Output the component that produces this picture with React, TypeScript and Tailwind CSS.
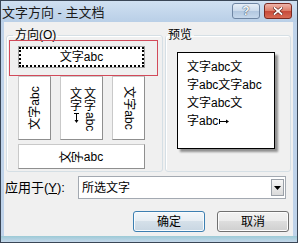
import React from "react";

function HArrow() {
  return (
    <svg width="11" height="7" viewBox="0 0 11 7" className="ml-[1px]">
      <path d="M0.5 1 V6 M0.5 3.5 H9" stroke="#000" strokeWidth="1" fill="none" />
      <path d="M7 1.5 L10 3.5 L7 5.5 Z" fill="#000" />
    </svg>
  );
}

function VArrow() {
  return (
    <svg width="7" height="11" viewBox="0 0 7 11" className="mt-[1px]">
      <path d="M1 0.5 H6 M3.5 0.5 V9" stroke="#000" strokeWidth="1" fill="none" />
      <path d="M1.5 7 L3.5 10 L5.5 7 Z" fill="#000" />
    </svg>
  );
}

export default function App() {
  return (
    <div className="w-[298px] h-[243px] border border-[#3a4656] bg-[#bfd3ea] flex flex-col font-['Liberation_Sans','Noto_Sans_CJK_SC',sans-serif] text-black overflow-hidden">
      {/* title bar */}
      <div className="h-[21px] flex items-start pl-[1px] pr-[5px] bg-linear-to-b from-[#d0e0f1] to-[#b9cfe7]">
        <span className="text-[13px] leading-[13px] mt-[5px] text-[#1a1a1a]">文字方向 - 主文档</span>
        <div className="ml-auto mt-[2px] flex gap-[4px]">
          <div className="w-[28px] h-[16px] rounded-[3px] border border-[#6f86a3] bg-[linear-gradient(#e6eef7,#cbdaeb_50%,#b2c7df_51%,#c6d8ec)] flex items-center justify-center text-[12px] leading-none font-bold text-[#f4f7fb] [text-shadow:0_0_1px_#33465e,0_0_1px_#33465e]">
            ?
          </div>
          <div className="w-[28px] h-[16px] rounded-[3px] border border-[#7a2a22] bg-[linear-gradient(#efb5aa,#dc7a66_50%,#c6493a_51%,#d86b55)] flex items-center justify-center">
            <svg width="10" height="8" viewBox="0 0 10 8">
              <path d="M1.5 1 L8.5 7 M8.5 1 L1.5 7" stroke="#5a1a12" strokeWidth="3" strokeLinecap="square" />
              <path d="M1.5 1 L8.5 7 M8.5 1 L1.5 7" stroke="#fff" strokeWidth="1.8" strokeLinecap="square" />
            </svg>
          </div>
        </div>
      </div>

      {/* body row with side frames */}
      <div className="flex-1 flex pl-[3px] pr-[4px]">
        <div className="w-[289px] bg-[#f0f0f0] flex flex-col pt-[7px]">
          {/* group boxes */}
          <div className="flex ml-[2px] gap-[2px]">
            <fieldset className="w-[157px] h-[143px] border border-[#d5dfe5] rounded-[3px] shadow-[inset_1px_1px_0_#ffffff]">
              <legend className="ml-[6px] px-[2px] text-[12px] leading-[12px] mt-[1px]">
                方向(<span className="underline">O</span>)
              </legend>
              <div className="w-[127px] ml-[11px] mt-[5px] flex flex-col">
                <div className="relative">
                  <div className="h-[22px] border border-[#a0a0a0] bg-white">
                    <div className="h-full border-2 border-dotted border-black flex items-center justify-center text-[12px] leading-none">
                      文字abc
                    </div>
                  </div>
                  <div className="absolute left-[-9px] top-[-6px] w-[149px] h-[36px] border border-[#d24a5a] pointer-events-none" />
                </div>

                <div className="mt-[8px] h-[64px] flex justify-between">
                  <div className="w-[33px] bg-white border border-[#c9c9c9] border-r-[#8f8f8f] border-b-[#8f8f8f] flex items-center justify-center">
                    <span className="inline-block -rotate-90 whitespace-nowrap text-[12px] leading-none">文字abc</span>
                  </div>
                  <div className="w-[43px] bg-white border border-[#c9c9c9] border-r-[#8f8f8f] border-b-[#8f8f8f] flex justify-center pl-[3px] pt-[11px] gap-[2px] text-[12px] leading-[12px]">
                    <div className="w-[12px] flex flex-col items-center">
                      <span>文</span>
                      <span>字</span>
                      <VArrow />
                    </div>
                    <div className="w-[12px] flex flex-col items-center">
                      <span>文</span>
                      <span>字</span>
                      <span className="[writing-mode:vertical-rl] leading-[12px]">abc</span>
                    </div>
                  </div>
                  <div className="w-[33px] bg-white border border-[#c9c9c9] border-r-[#8f8f8f] border-b-[#8f8f8f] flex items-center justify-center">
                    <span className="inline-block rotate-90 whitespace-nowrap text-[12px] leading-none">文字abc</span>
                  </div>
                </div>

                <div className="mt-[4px] h-[25px] bg-white border border-[#c9c9c9] border-r-[#8f8f8f] border-b-[#8f8f8f] flex items-center justify-center text-[12px] leading-none">
                  <span className="inline-block w-[12px] -rotate-90">文</span>
                  <span className="inline-block w-[12px] -rotate-90">字</span>
                  <span>abc</span>
                </div>
              </div>
            </fieldset>

            <fieldset className="w-[126px] h-[143px] border border-[#d5dfe5] rounded-[3px] shadow-[inset_1px_1px_0_#ffffff]">
              <legend className="ml-0 px-[2px] text-[12px] leading-[12px] mt-[1px]">预览</legend>
              <div className="mt-[11px] ml-[11px] w-[98px] h-[97px] bg-white border border-black shadow-[3px_3px_2px_rgba(0,0,0,0.4)] pl-[9px] pt-[5px] text-[12px] leading-[18px]">
                <div>文字abc文</div>
                <div>字abc文字abc</div>
                <div>文字abc文</div>
                <div className="flex items-center">
                  字abc
                  <HArrow />
                </div>
              </div>
            </fieldset>
          </div>

          {/* apply to */}
          <div className="mt-[4px] flex items-center">
            <div className="w-[74px] pl-[1px] text-[13px] leading-none whitespace-nowrap">
              应用于(<span className="underline">Y</span>):
            </div>
            <div className="w-[208px] h-[23px] border border-[#a3a9b1] bg-white flex items-center pl-[3px]">
              <span className="text-[12px] leading-none">所选文字</span>
              <div className="ml-auto mr-[1px] w-[13px] h-[17px] border border-[#9aa0a8] bg-linear-to-b from-[#f6f6f6] to-[#dadada] flex items-center justify-center">
                <svg width="7" height="4" viewBox="0 0 7 4">
                  <path d="M0 0 H7 L3.5 4 Z" fill="#000" />
                </svg>
              </div>
            </div>
          </div>

          {/* buttons */}
          <div className="mt-[12px] flex justify-end gap-[12px] pr-[4px]">
            <div className="w-[72px] h-[21px] rounded-[3px] border border-[#3c7fb1] bg-[linear-gradient(#f3f7fa,#e6edf3_49%,#d5e0e9_50%,#c8d6e2)] shadow-[inset_0_0_0_1px_#f8fbfd] flex items-center justify-center text-[12px] leading-none">
              确定
            </div>
            <div className="w-[72px] h-[21px] rounded-[3px] border border-[#707070] bg-[linear-gradient(#f2f2f2,#ebebeb_49%,#dddddd_50%,#cfcfcf)] shadow-[inset_0_0_0_1px_#fcfcfc] flex items-center justify-center text-[12px] leading-none">
              取消
            </div>
          </div>
        </div>
      </div>

      {/* bottom frame */}
      <div className="h-[6px] bg-linear-to-b from-[#9ccad6] to-[#c4d7ea]" />
    </div>
  );
}
